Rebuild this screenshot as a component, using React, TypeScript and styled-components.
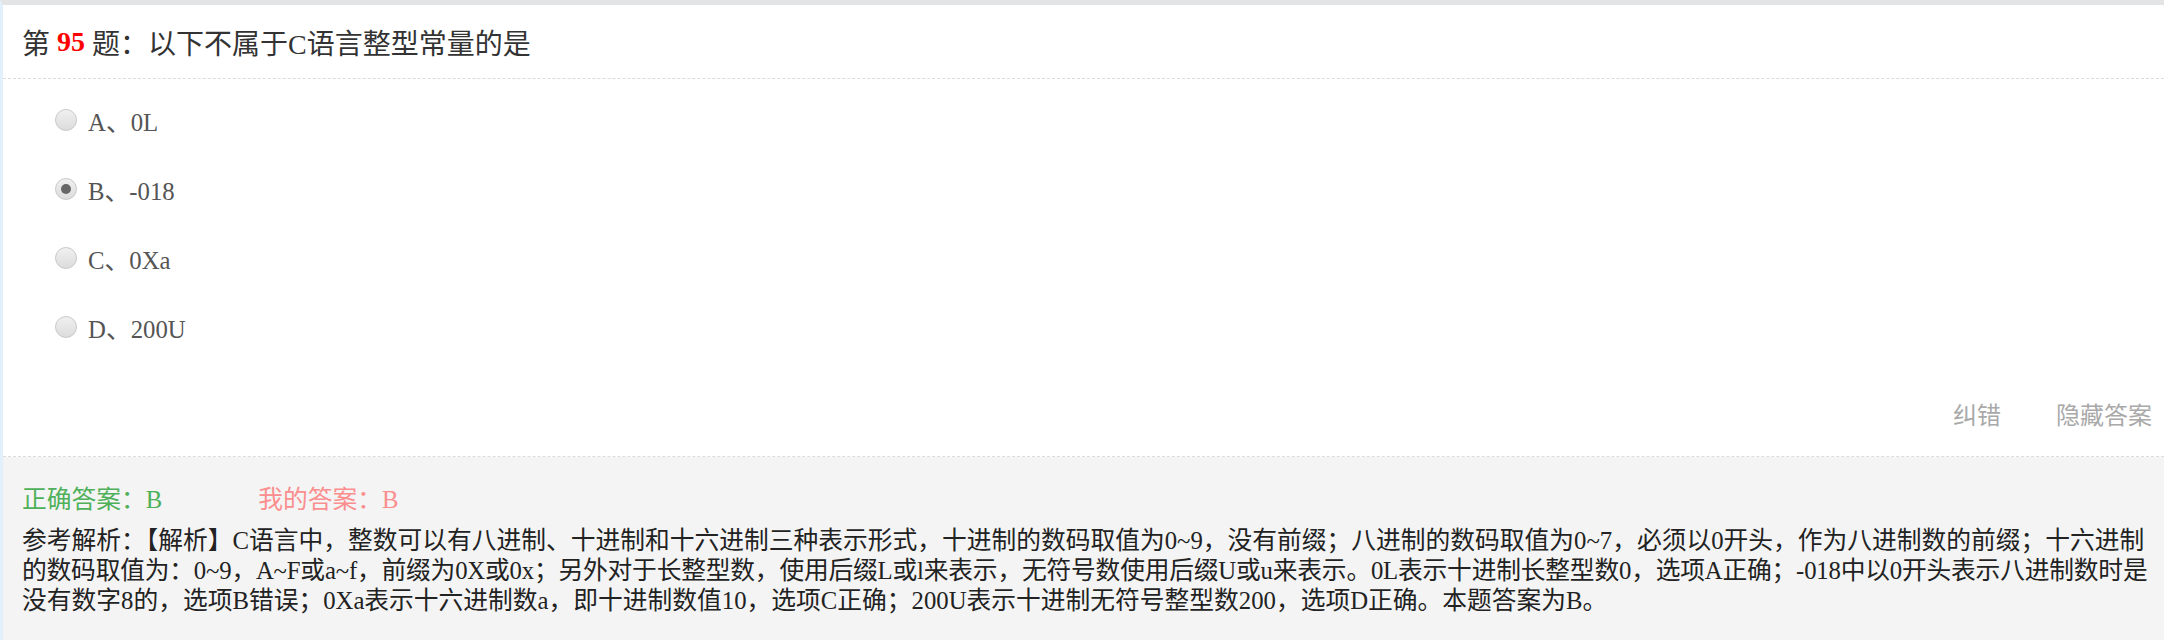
import React from "react";
import styled, { createGlobalStyle } from "styled-components";

const GlobalStyle = createGlobalStyle`
  html, body { margin: 0; padding: 0; background: #ffffff; }
  body { font-family: "Liberation Serif", "Noto Sans CJK SC", serif; }
  * { box-sizing: border-box; }
`;

const Page = styled.div`
  width: 2164px;
  min-height: 640px;
  border-top: 5px solid #e3e4e6;
  border-left: 3px solid #e2f0fb;
  display: flex;
  flex-direction: column;
  background: #ffffff;
`;

const QuestionHeader = styled.div`
  height: 74px;
  display: flex;
  align-items: center;
  padding-left: 19px;
  border-bottom: 1px dashed #dcdcdc;
  font-size: 28px;
  color: #333;
`;

const Num = styled.b`
  color: #ff0000;
  margin: 0 7px;
`;

const OptionList = styled.ul`
  list-style: none;
  margin: 0;
  padding: 6px 0 0 52px;
`;

const OptionItem = styled.li`
  height: 69px;
  display: flex;
  align-items: center;
  gap: 11px;
  font-size: 24.75px;
  color: #555;
`;

const Radio = styled.span<{ $checked?: boolean }>`
  position: relative;
  width: 22px;
  height: 22px;
  border-radius: 50%;
  border: 1px solid #c9c9c9;
  background: linear-gradient(#f0f0f0, #dcdcdc);
  flex: none;
  &::after {
    content: "";
    display: ${(p) => (p.$checked ? "block" : "none")};
    position: absolute;
    left: 5px;
    top: 5px;
    width: 10px;
    height: 10px;
    border-radius: 50%;
    background: #666;
  }
`;

const Tools = styled.div`
  display: flex;
  justify-content: flex-end;
  align-items: center;
  gap: 55px;
  height: 40px;
  margin-top: 32px;
  padding-right: 12px;
  font-size: 24px;
  color: #a9a9a9;
  font-family: "Noto Sans CJK SC", sans-serif;
`;

const Divider = styled.div`
  margin-top: 23px;
  border-bottom: 1px dashed #dcdcdc;
`;

const AnswerPanel = styled.div`
  flex: 1;
  background: #f4f4f4;
  padding: 25px 15px 20px 19px;
  font-size: 24.75px;
`;

const AnswerRow = styled.div`
  height: 30px;
  display: flex;
  align-items: center;
  gap: 96px;
  margin-bottom: 14px;
`;

const Answer = styled.span<{ $color: string }>`
  color: ${(p) => p.$color};
`;

const Analysis = styled.div`
  color: #222;
  line-height: 30px;
`;

const Line = styled.div<{ $tight?: boolean }>`
  white-space: nowrap;
  letter-spacing: ${(p) => (p.$tight ? "-0.2px" : "0")};
`;

const options = [
  { key: "A", text: "0L" },
  { key: "B", text: "-018", checked: true },
  { key: "C", text: "0Xa" },
  { key: "D", text: "200U" },
];

export default function App() {
  return (
    <>
      <GlobalStyle />
      <Page>
        <QuestionHeader>
          第<Num>95</Num>题：以下不属于C语言整型常量的是
        </QuestionHeader>
        <OptionList>
          {options.map((o) => (
            <OptionItem key={o.key}>
              <Radio $checked={o.checked} />
              <span>
                {o.key}、{o.text}
              </span>
            </OptionItem>
          ))}
        </OptionList>
        <Tools>
          <span>纠错</span>
          <span>隐藏答案</span>
        </Tools>
        <Divider />
        <AnswerPanel>
          <AnswerRow>
            <Answer $color="#4fb05a">正确答案：B</Answer>
            <Answer $color="#fb8e8e">我的答案：B</Answer>
          </AnswerRow>
          <Analysis>
            <Line>
              参考解析：【解析】C语言中，整数可以有八进制、十进制和十六进制三种表示形式，十进制的数码取值为0~9，没有前缀；八进制的数码取值为0~7，必须以0开头，作为八进制数的前缀；十六进制
            </Line>
            <Line $tight>
              的数码取值为：0~9，A~F或a~f，前缀为0X或0x；另外对于长整型数，使用后缀L或l来表示，无符号数使用后缀U或u来表示。0L表示十进制长整型数0，选项A正确；-018中以0开头表示八进制数时是
            </Line>
            <Line>
              没有数字8的，选项B错误；0Xa表示十六进制数a，即十进制数值10，选项C正确；200U表示十进制无符号整型数200，选项D正确。本题答案为B。
            </Line>
          </Analysis>
        </AnswerPanel>
      </Page>
    </>
  );
}
